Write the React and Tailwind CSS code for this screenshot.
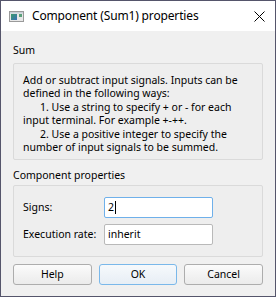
import React from "react";

function AppIcon() {
  return (
    <svg width="15" height="11" viewBox="0 0 15 11" className="block">
      <rect x="0.5" y="0.5" width="14" height="10" fill="#e8e8e8" stroke="#9a9a9a" />
      <rect x="1" y="1" width="13" height="1.5" fill="#c8d0d8" />
      <defs>
        <linearGradient id="g1" x1="0" y1="0" x2="1" y2="1">
          <stop offset="0" stopColor="#3a9a6a" />
          <stop offset="1" stopColor="#3b6fb8" />
        </linearGradient>
      </defs>
      <rect x="2" y="3" width="6" height="6" fill="url(#g1)" />
      <rect x="10" y="3" width="3" height="3" fill="#5aa07a" />
    </svg>
  );
}

function CloseIcon() {
  return (
    <svg width="11" height="11" viewBox="0 0 11 11" className="block">
      <path d="M0.5 0.5 L10.5 10.5 M10.5 0.5 L0.5 10.5" stroke="#000" strokeWidth="1" />
    </svg>
  );
}

export default function App() {
  const font = { fontFamily: '"Noto Sans", "Open Sans", sans-serif' };
  return (
    <div
      className="w-[276px] h-[297px] border border-[#55556b] bg-[#f0f0f0] flex flex-col text-[10.5px] text-black overflow-hidden whitespace-nowrap"
      style={font}
    >
      <div className="h-[30px] bg-white flex items-center shrink-0">
        <div className="ml-[8px] mt-[1px]">
          <AppIcon />
        </div>
        <div className="ml-[8px] text-[12px] tracking-[-0.15px] leading-none">Component (Sum1) properties</div>
        <div className="ml-auto mr-[10px]">
          <CloseIcon />
        </div>
      </div>

      <div className="px-[12px] flex flex-col">
        <div className="mt-[11px] leading-[16px]">Sum</div>
        <div className="mt-[5px] h-[97px] border border-[#dadada] rounded-[2px] bg-[#eeeeee] pl-[9px] pt-[10px] leading-[13.4px]">
          <div>Add or subtract input signals. Inputs can be</div>
          <div>defined in the following ways:</div>
          <div className="pl-[17px]">1. Use a string to specify + or - for each</div>
          <div>input terminal. For example +-++.</div>
          <div className="pl-[17px]">2. Use a positive integer to specify the</div>
          <div>number of input signals to be summed.</div>
        </div>

        <div className="mt-[7px] leading-[16px]">Component properties</div>
        <div className="mt-[2px] h-[72px] border border-[#dadada] rounded-[2px] bg-[#eeeeee] pl-[9px] pt-[11px] flex flex-col gap-[6px]">
          <div className="flex items-center h-[21px]">
            <div className="w-[81px]">Signs:</div>
            <div className="w-[109px] h-[21px] bg-white border border-[#6fb0ea] rounded-[2px] flex items-center pl-[3px]">
              <span>2</span>
              <span className="w-px h-[13px] bg-black ml-[1px]" />
            </div>
          </div>
          <div className="flex items-center h-[21px]">
            <div className="w-[81px]">Execution rate:</div>
            <div className="w-[109px] h-[21px] bg-white border border-[#b9b9b9] rounded-[2px] flex items-center pl-[3px]">
              inherit
            </div>
          </div>
        </div>

        <div className="mt-[7px] grid grid-cols-3 gap-[7px]">
          <button className="h-[21px] border border-[#adadad] rounded-[3px] bg-gradient-to-b from-[#fbfbfb] to-[#ebebeb] text-[10.5px] leading-none">
            Help
          </button>
          <button className="h-[21px] border border-[#7ab8ea] rounded-[3px] bg-gradient-to-b from-[#f6f9fc] to-[#e7eef5] text-[10.5px] leading-none">
            OK
          </button>
          <button className="h-[21px] border border-[#adadad] rounded-[3px] bg-gradient-to-b from-[#fbfbfb] to-[#ebebeb] text-[10.5px] leading-none">
            Cancel
          </button>
        </div>
      </div>
    </div>
  );
}
